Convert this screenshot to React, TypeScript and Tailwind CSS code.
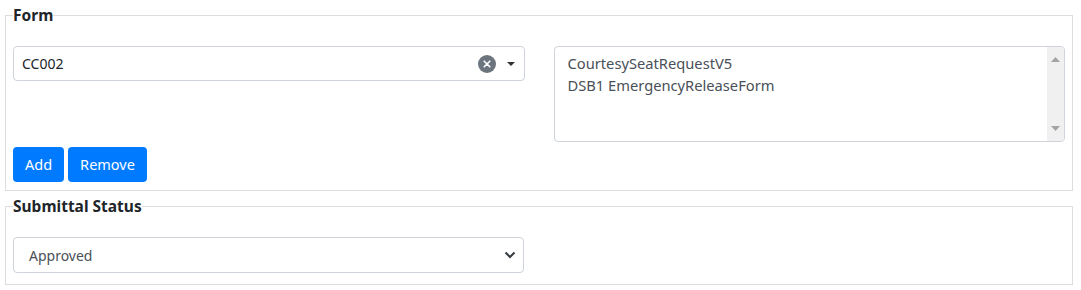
import React from "react";

const font = { fontFamily: '"Noto Sans", "Open Sans", sans-serif' };

function ClearIcon() {
  return (
    <svg width="18" height="18" viewBox="0 0 18 18">
      <circle cx="9" cy="9" r="9" fill="#6c757d" />
      <path d="M6.2 6.2 L11.8 11.8 M11.8 6.2 L6.2 11.8" stroke="#fff" strokeWidth="1.6" strokeLinecap="round" />
    </svg>
  );
}

function Caret() {
  return (
    <svg width="10" height="6" viewBox="0 0 10 6">
      <path d="M1 1 L9 1 L5 5 Z" fill="#333" />
    </svg>
  );
}

function Chevron() {
  return (
    <svg width="12" height="8" viewBox="0 0 12 8">
      <path d="M1.5 1.5 L6 6 L10.5 1.5" stroke="#343a40" strokeWidth="2" fill="none" />
    </svg>
  );
}

export default function App() {
  return (
    <div className="w-[1081px] h-[290px] bg-white pt-[3px] text-[14px]" style={font}>
      <fieldset className="ml-[5px] w-[1068px] border border-[#dddddd] px-[7px] pb-[8px]">
        <legend className="text-[15.5px] leading-[24px] font-bold text-[#212529]">Form</legend>
        <div className="mt-[19px] grid grid-cols-2 gap-[29px]">
          <div>
            <div className="h-[35px] border border-[#ced4da] rounded-[4px] flex items-center pl-[8px] pr-[8px]">
              <span className="flex-1 text-[#212529]">CC002</span>
              <ClearIcon />
              <span className="ml-[10px]"><Caret /></span>
            </div>
          </div>
          <div className="h-[96px] border border-[#ced4da] rounded-[4px] flex overflow-hidden">
            <div className="flex-1 pl-[13px] pt-[5px] text-[#495057] text-[14.7px] leading-[22px]">
              <div>CourtesySeatRequestV5</div>
              <div>DSB1 EmergencyReleaseForm</div>
            </div>
            <div className="w-[17px] bg-[#f0f0f0] flex flex-col items-center justify-between py-[10px]">
              <svg width="9" height="5" viewBox="0 0 9 5"><path d="M0 5 L4.5 0 L9 5 Z" fill="#a3a3a3" /></svg>
              <svg width="9" height="5" viewBox="0 0 9 5"><path d="M0 0 L4.5 5 L9 0 Z" fill="#a3a3a3" /></svg>
            </div>
          </div>
        </div>
        <div className="mt-[5px] flex gap-[4px]">
          <button className="h-[35px] px-[12px] bg-[#007bff] text-white rounded-[4px] text-[14.5px]">Add</button>
          <button className="h-[35px] px-[12px] bg-[#007bff] text-white rounded-[4px] text-[14.5px]">Remove</button>
        </div>
      </fieldset>
      <fieldset className="ml-[5px] mt-[3px] w-[1068px] border border-[#dddddd] px-[7px] pb-[11px]">
        <legend className="text-[15.5px] leading-[24px] font-bold text-[#212529]">Submittal Status</legend>
        <div className="mt-[19px] w-[511px] h-[36px] border border-[#ced4da] rounded-[4px] flex items-center pl-[15px] pr-[7px]">
          <span className="flex-1 text-[#495057]">Approved</span>
          <Chevron />
        </div>
      </fieldset>
    </div>
  );
}
